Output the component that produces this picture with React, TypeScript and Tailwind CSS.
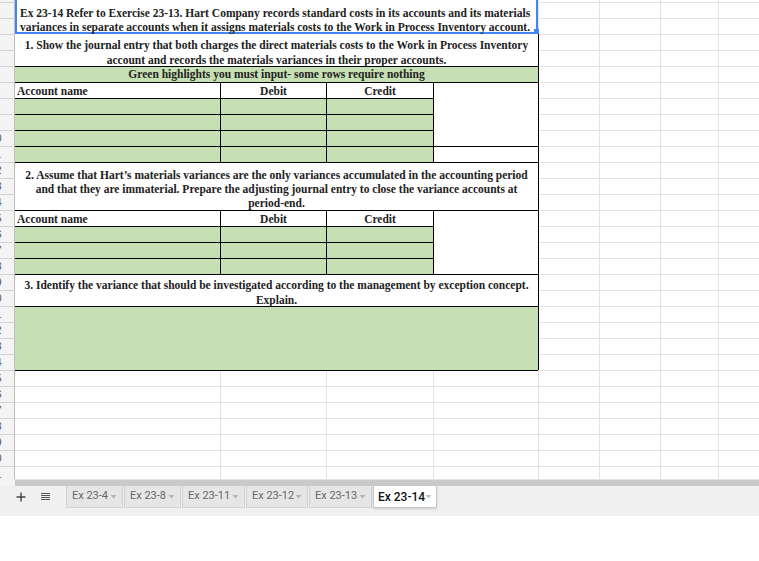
import React from "react";

const COLS = "grid-cols-[15px_205px_106px_107px_105px_61px_61px_58px_41px]";
const ROWS = "grid-rows-[2px_repeat(30,16px)]";
const serif = { fontFamily: '"Liberation Serif", "Times New Roman", serif' };

function Background() {
  const rows = Array.from({ length: 31 }, (_, i) => i + 1);
  return (
    <div className={`col-start-1 row-start-1 grid ${COLS} ${ROWS}`}>
      {rows.map((r) =>
        Array.from({ length: 9 }, (_, c) => {
          if (c === 0) {
            return (
              <div
                key={`${r}-${c}`}
                className={
                  r === 1
                    ? "bg-[#f4f4f4] border-r border-[#bdbdbd] overflow-hidden"
                    : "bg-[#f4f4f4] border-r border-t border-r-[#bdbdbd] border-t-[#d3d3d3] overflow-hidden"
                }
              >
                {r > 1 && (
                  <div className="w-[35px] -ml-[22px] text-center text-[11px] leading-[15px] text-[#555]" style={{ fontFamily: '"Liberation Sans", Arial, sans-serif' }}>
                    {r}
                  </div>
                )}
              </div>
            );
          }
          const cls =
            r === 1
              ? c === 1
                ? ""
                : "border-l border-[#e2e2e2]"
              : c === 1
              ? "border-t border-[#e2e2e2]"
              : "border-t border-l border-[#e2e2e2]";
          return <div key={`${r}-${c}`} className={cls} />;
        })
      )}
    </div>
  );
}

function Line({ children, center }: { children: React.ReactNode; center?: boolean }) {
  return (
    <div className={center ? "flex justify-center whitespace-nowrap" : "whitespace-nowrap"}>
      <span>{children}</span>
    </div>
  );
}

function Content() {
  const txt = "text-[11.5px] font-bold text-[#222]";
  return (
    <div className={`col-start-1 row-start-1 grid ${COLS} ${ROWS} ${txt}`} style={serif}>
      {/* Title with selection */}
      <div className="col-[2/6] row-[1/4] relative bg-white border-x-2 border-b-2 border-[#4285f4] pt-[6px] pl-[3px] leading-[14px]">
        <Line>Ex 23-14 Refer to Exercise 23-13. Hart Company records standard costs in its accounts and its materials</Line>
        <Line>variances in separate accounts when it assigns materials costs to the Work in Process Inventory account.</Line>
        <div className="absolute -right-[3px] -bottom-[2px] w-[5px] h-[5px] bg-[#4285f4]" />
      </div>

      {/* Section 1 */}
      <div className="col-[2/6] row-[4/6] bg-white pt-[4px] leading-[15px]">
        <Line center>1. Show the journal entry that both charges the direct materials costs to the Work in Process Inventory</Line>
        <Line center>account and records the materials variances in their proper accounts.</Line>
      </div>
      <div className="col-[2/6] row-[6/7] bg-[#c6e0b4] border-t border-black leading-[15px]">
        <Line center>Green highlights you must input- some rows require nothing</Line>
      </div>
      <div className="col-[2/3] row-[7/8] bg-white border-t border-black pl-[2px] pt-[1px] leading-[15px]">Account name</div>
      <div className="col-[3/4] row-[7/8] bg-white border-t border-l border-black pt-[1px] leading-[15px] text-center">Debit</div>
      <div className="col-[4/5] row-[7/8] bg-white border-t border-l border-black pt-[1px] leading-[15px] text-center">Credit</div>
      <div className="col-[5/6] row-[7/11] bg-white border-t border-l border-black" />
      <div className="col-[5/6] row-[11/12] bg-white border-t border-l border-black" />

      <div className="col-[2/3] row-[8/9] bg-[#c6e0b4] border-t border-black" />
      <div className="col-[3/4] row-[8/9] bg-[#c6e0b4] border-t border-l border-black" />
      <div className="col-[4/5] row-[8/9] bg-[#c6e0b4] border-t border-l border-black" />
      <div className="col-[2/3] row-[9/10] bg-[#c6e0b4] border-t border-black" />
      <div className="col-[3/4] row-[9/10] bg-[#c6e0b4] border-t border-l border-black" />
      <div className="col-[4/5] row-[9/10] bg-[#c6e0b4] border-t border-l border-black" />
      <div className="col-[2/3] row-[10/11] bg-[#c6e0b4] border-t border-black" />
      <div className="col-[3/4] row-[10/11] bg-[#c6e0b4] border-t border-l border-black" />
      <div className="col-[4/5] row-[10/11] bg-[#c6e0b4] border-t border-l border-black" />
      <div className="col-[2/3] row-[11/12] bg-[#c6e0b4] border-t border-black" />
      <div className="col-[3/4] row-[11/12] bg-[#c6e0b4] border-t border-l border-black" />
      <div className="col-[4/5] row-[11/12] bg-[#c6e0b4] border-t border-l border-black" />

      {/* Section 2 */}
      <div className="col-[2/6] row-[12/15] bg-white border-t border-black pt-[5px] leading-[14px]">
        <Line center>2. Assume that Hart’s materials variances are the only variances accumulated in the accounting period</Line>
        <Line center>and that they are immaterial. Prepare the adjusting journal entry to close the variance accounts at</Line>
        <Line center>period-end.</Line>
      </div>
      <div className="col-[2/3] row-[15/16] bg-white border-t border-black pl-[2px] pt-[1px] leading-[15px]">Account name</div>
      <div className="col-[3/4] row-[15/16] bg-white border-t border-l border-black pt-[1px] leading-[15px] text-center">Debit</div>
      <div className="col-[4/5] row-[15/16] bg-white border-t border-l border-black pt-[1px] leading-[15px] text-center">Credit</div>
      <div className="col-[5/6] row-[15/19] bg-white border-t border-l border-black" />

      <div className="col-[2/3] row-[16/17] bg-[#c6e0b4] border-t border-black" />
      <div className="col-[3/4] row-[16/17] bg-[#c6e0b4] border-t border-l border-black" />
      <div className="col-[4/5] row-[16/17] bg-[#c6e0b4] border-t border-l border-black" />
      <div className="col-[2/3] row-[17/18] bg-[#c6e0b4] border-t border-black" />
      <div className="col-[3/4] row-[17/18] bg-[#c6e0b4] border-t border-l border-black" />
      <div className="col-[4/5] row-[17/18] bg-[#c6e0b4] border-t border-l border-black" />
      <div className="col-[2/3] row-[18/19] bg-[#c6e0b4] border-t border-black" />
      <div className="col-[3/4] row-[18/19] bg-[#c6e0b4] border-t border-l border-black" />
      <div className="col-[4/5] row-[18/19] bg-[#c6e0b4] border-t border-l border-black" />

      {/* Section 3 */}
      <div className="col-[2/6] row-[19/21] bg-white border-t border-black pt-[3px] leading-[15px]">
        <Line center>3. Identify the variance that should be investigated according to the management by exception concept.</Line>
        <Line center>Explain.</Line>
      </div>
      <div className="col-[2/6] row-[21/25] bg-[#c6e0b4] border-t border-black" />
      <div className="col-[2/6] row-[25/26] border-t border-black" />

      {/* right edge of the table */}
      <div className="col-[6/7] row-[4/25] border-l border-black" />
    </div>
  );
}

function Arrow({ color }: { color: string }) {
  return (
    <svg width="7" height="4" viewBox="0 0 7 4" className="shrink-0">
      <path d="M0.5 0 L6.5 0 L3.5 3.5 Z" fill={color} />
    </svg>
  );
}

function Tab({ label, w, active }: { label: string; w: string; active?: boolean }) {
  return (
    <div
      className={
        active
          ? `${w} h-[22px] bg-white border border-t-0 border-[#c8c8c8] shadow-[0_1px_2px_rgba(0,0,0,0.15)] flex items-center justify-between pl-[4px] pr-[6px] text-[12px] font-medium text-[#111]`
          : `${w} h-[22px] bg-[#e6e6e6] border border-t-0 border-[#d2d2d2] flex items-center justify-between pl-[5px] pr-[5px] text-[11px] text-[#666]`
      }
    >
      <span className="whitespace-nowrap">{label}</span>
      <Arrow color={active ? "#c4c4c4" : "#b5b5b5"} />
    </div>
  );
}

export default function App() {
  return (
    <div className="w-[759px] h-[561px] bg-white overflow-hidden">
      <div className="grid h-[479px] overflow-hidden">
        <Background />
        <Content />
      </div>
      {/* horizontal scrollbar */}
      <div className="h-[7px] flex">
        <div className="w-[15px] bg-[#f4f4f4]" />
        <div className="flex-1 bg-[#c9c9c9] border-t border-[#e3e3e3]" />
      </div>
      {/* sheet tabs */}
      <div className="h-[30px] bg-[#f0f0f0] flex items-start" style={{ fontFamily: 'Roboto, "Liberation Sans", Arial, sans-serif' }}>
        <div className="w-[66px] h-[22px] flex items-center">
          <svg width="10" height="10" viewBox="0 0 10 10" className="ml-[16px]">
            <path d="M5 0.5 V9.5 M0.5 5 H9.5" stroke="#444" strokeWidth="1.4" />
          </svg>
          <svg width="9" height="8" viewBox="0 0 9 8" className="ml-[15px]">
            <path d="M0 0.5 H9 M0 2.5 H9 M0 4.5 H9 M0 6.5 H9" stroke="#555" strokeWidth="1" />
          </svg>
        </div>
        <div className="flex gap-[1px]">
          <Tab label="Ex 23-4" w="w-[57px]" />
          <Tab label="Ex 23-8" w="w-[57px]" />
          <Tab label="Ex 23-11" w="w-[63px]" />
          <Tab label="Ex 23-12" w="w-[62px]" />
          <Tab label="Ex 23-13" w="w-[63px]" />
          <Tab label="Ex 23-14" w="w-[64px]" active />
        </div>
      </div>
    </div>
  );
}
